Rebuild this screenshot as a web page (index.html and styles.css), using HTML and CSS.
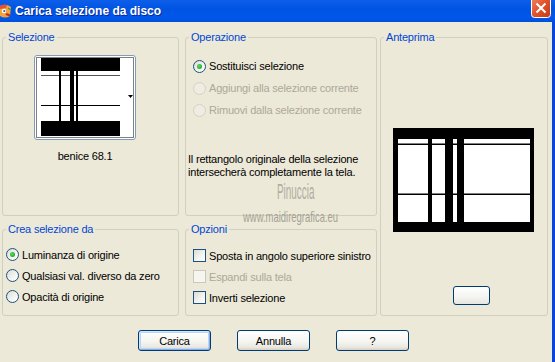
FILE: index.html
```html
<!DOCTYPE html>
<html lang="it">
<head>
<meta charset="utf-8">
<title>Carica selezione da disco</title>
<link rel="stylesheet" href="styles.css">
</head>
<body>
<div class="window">
  <header class="titlebar">
    <svg class="app-icon" width="12" height="16" viewBox="0 0 12 16">
      <path d="M0 3 Q6 0 11 4 L10 13 Q5 16 0 13 Z" fill="#F2A43A"/>
      <path d="M0 3 Q4 1 7 2 L6 5 L0 6 Z" fill="#E8532B"/>
      <circle cx="4" cy="8" r="2.2" fill="#fff"/>
      <circle cx="4.3" cy="8" r="1.1" fill="#2A56C6"/>
      <path d="M6 11 L10 12.5" stroke="#C8281E" stroke-width="2"/>
      <path d="M8 5 L11 7" stroke="#3E9A3A" stroke-width="1.5"/>
    </svg>
    <span class="title">Carica selezione da disco</span>
    <svg class="close" width="20" height="18" viewBox="0 0 20 18">
      <defs>
        <linearGradient id="cg" x1="0" y1="0" x2="1" y2="1">
          <stop offset="0" stop-color="#F08A65"/>
          <stop offset="0.5" stop-color="#E1522A"/>
          <stop offset="1" stop-color="#C23A14"/>
        </linearGradient>
      </defs>
      <rect x="0.5" y="-3.5" width="19" height="21" rx="3" fill="url(#cg)" stroke="#fff"/>
      <path d="M5.5 3.5 L14.5 12.5 M14.5 3.5 L5.5 12.5" stroke="#fff" stroke-width="2"/>
    </svg>
  </header>

  <main class="client">
    <div class="panels">
      <div class="col col-left">
        <section class="group group-top">
          <span class="group-label">Selezione</span>
          <div class="thumb">
            <div class="thumb-btn">
              <svg class="thumb-svg" width="100" height="83" viewBox="0 0 100 83">
                <rect x="1.5" y="1.5" width="97" height="80" fill="none" stroke="#000" stroke-dasharray="1 1"/>
                <rect x="6" y="2" width="79" height="13" fill="#000"/>
                <rect x="6" y="19" width="79" height="1" fill="#555"/>
                <rect x="6" y="49" width="79" height="1" fill="#000"/>
                <rect x="6" y="65" width="79" height="15" fill="#000"/>
                <rect x="24" y="15" width="2" height="50" fill="#000"/>
                <rect x="35" y="15" width="4" height="50" fill="#000"/>
                <rect x="41" y="15" width="2" height="50" fill="#000"/>
                <polygon points="93,39 98,39 95.5,42" fill="#000"/>
              </svg>
            </div>
            <div class="thumb-name">benice 68.1</div>
          </div>
        </section>
        <section class="group group-bottom">
          <span class="group-label">Crea selezione da</span>
          <ul class="opts opts-crea">
            <li class="opt"><span class="radio checked"></span>Luminanza di origine</li>
            <li class="opt"><span class="radio"></span>Qualsiasi val. diverso da zero</li>
            <li class="opt"><span class="radio"></span>Opacità di origine</li>
          </ul>
        </section>
      </div>

      <div class="col col-mid">
        <section class="group group-top">
          <span class="group-label">Operazione</span>
          <ul class="opts opts-op">
            <li class="opt"><span class="radio checked"></span>Sostituisci selezione</li>
            <li class="opt disabled"><span class="radio"></span>Aggiungi alla selezione corrente</li>
            <li class="opt disabled"><span class="radio"></span>Rimuovi dalla selezione corrente</li>
          </ul>
          <p class="note">Il rettangolo originale della selezione<br>intersecherà completamente la tela.</p>
        </section>
        <section class="group group-bottom">
          <span class="group-label">Opzioni</span>
          <ul class="opts opts-opz">
            <li class="opt"><span class="check"></span>Sposta in angolo superiore sinistro</li>
            <li class="opt disabled"><span class="check"></span>Espandi sulla tela</li>
            <li class="opt"><span class="check"></span>Inverti selezione</li>
          </ul>
        </section>
      </div>

      <section class="group group-preview">
        <span class="group-label">Anteprima</span>
        <svg class="preview-img" width="141" height="104" viewBox="0 0 141 104">
          <rect x="0" y="0" width="141" height="104" fill="#000"/>
          <rect x="5" y="11" width="132" height="83" fill="#fff"/>
          <rect x="5" y="15.5" width="132" height="1.5" fill="#000"/>
          <rect x="5" y="65.5" width="132" height="1.5" fill="#000"/>
          <rect x="35" y="11" width="4" height="83" fill="#000"/>
          <rect x="52" y="11" width="8" height="83" fill="#000"/>
          <rect x="64" y="11" width="7" height="83" fill="#000"/>
        </svg>
        <div class="preview-btn"></div>
      </section>
    </div>

    <div class="buttons">
      <button class="btn btn-default" type="button">Carica</button>
      <button class="btn" type="button">Annulla</button>
      <button class="btn" type="button">?</button>
    </div>
  </main>

  <div class="wm wm-name">Pinuccia</div>
  <div class="wm wm-url">www.maidiregrafica.eu</div>
</div>
</body>
</html>
```

FILE: styles.css
```css
body {
  margin: 0;
  background: #ECE9D8;
  font-family: "Liberation Sans", Arial, sans-serif;
  font-size: 11px;
  letter-spacing: -0.2px;
  color: #000;
}

.window {
  position: relative;
  width: 555px;
  height: 362px;
  overflow: hidden;
  background: #ECE9D8;
}

/* Title bar */
.titlebar {
  display: flex;
  align-items: center;
  height: 22px;
  background: linear-gradient(to bottom, #0D5FEA 0%, #0054E3 40%, #0057E9 80%, #004FDC 100%);
}

.app-icon {
  flex: none;
  display: block;
}

.title {
  margin-left: 3px;
  color: #fff;
  font-weight: bold;
  font-size: 12px;
  letter-spacing: 0;
  text-shadow: 1px 1px 0 #0A2A9A;
}

.close {
  flex: none;
  display: block;
  align-self: flex-start;
  margin-left: auto;
  margin-right: 4px;
}

/* Client area */
.client {
  height: 340px;
  box-sizing: border-box;
  border-right: 3px solid #0845D8;
  padding: 15px 0 0 2px;
}

.panels {
  display: flex;
  align-items: flex-start;
}

.col {
  display: flex;
  flex-direction: column;
}

.col-left {
  width: 177px;
  margin-right: 6px;
}

.col-mid {
  width: 192px;
  margin-right: 3px;
}

.group {
  box-sizing: border-box;
  border: 1px solid #D0D0BF;
  border-radius: 3px;
}

.group-top {
  height: 179px;
}

.group-bottom {
  height: 87px;
  margin-top: 13px;
}

.group-preview {
  width: 168px;
  height: 279px;
}

.group-label {
  display: table;
  margin: -8px 0 0 3px;
  padding: 0 2px;
  line-height: 14px;
  color: #0046D5;
  background: #ECE9D8;
}

/* Selection thumbnail */
.thumb {
  display: flex;
  flex-direction: column;
  align-items: center;
  width: 102px;
  margin: 11px 0 0 31px;
}

.thumb-btn {
  box-sizing: border-box;
  width: 102px;
  height: 85px;
  border: 1px solid #7F9DB9;
  border-radius: 3px;
  background: #fff;
}

.thumb-svg {
  display: block;
}

.thumb-name {
  margin-top: 10px;
  line-height: 13px;
}

/* Option lists */
.opts {
  list-style: none;
  margin: 0;
}

.opt {
  display: flex;
  align-items: center;
  gap: 3px;
  height: 21px;
}

.opts-op {
  margin-top: 11px;
  padding-left: 7px;
}

.opts-op .opt {
  height: 22px;
}

.opts-crea {
  margin-top: 8px;
  padding-left: 3px;
}

.opts-opz {
  margin-top: 9px;
  padding-left: 7px;
}

.opt.disabled {
  color: #ACA899;
}

.radio {
  flex: none;
  display: flex;
  align-items: center;
  justify-content: center;
  box-sizing: border-box;
  width: 13px;
  height: 13px;
  border: 1px solid #1C5180;
  border-radius: 50%;
  background: linear-gradient(135deg, #DCDCD7 0%, #F4F4F0 60%, #FFFFFF 100%);
}

.radio.checked::after {
  content: "";
  width: 5px;
  height: 5px;
  border-radius: 50%;
  background: radial-gradient(circle at 40% 40%, #61D861 0%, #2CB22C 60%, #21A121 100%);
}

.opt.disabled .radio {
  border-color: #D5D2C3;
  background: #EFEDE3;
}

.check {
  flex: none;
  box-sizing: border-box;
  width: 13px;
  height: 13px;
  border: 1px solid #1C5180;
  background: linear-gradient(135deg, #DCDCD7 0%, #F4F4F0 60%, #FFFFFF 100%);
}

.opt.disabled .check {
  border-color: #CAC8BB;
  background: #F6F5F0;
}

.note {
  margin: 32px 0 0 2px;
  line-height: 13px;
}

/* Preview */
.preview-img {
  display: block;
  margin: 84px 0 0 12px;
}

.preview-btn {
  box-sizing: border-box;
  width: 37px;
  height: 19px;
  margin: 54px 0 0 72px;
  border: 1px solid #003C74;
  border-radius: 3px;
  background: linear-gradient(#FFFFFF 0%, #F4F4F1 60%, #E6E5DF 100%);
}

/* Buttons */
.buttons {
  display: flex;
  gap: 26px;
  margin-top: 14px;
  padding-left: 136px;
}

.btn {
  box-sizing: border-box;
  width: 73px;
  height: 21px;
  padding: 0;
  border: 1px solid #003C74;
  border-radius: 3px;
  background: linear-gradient(#FFFFFF 0%, #F5F5F1 55%, #E9E8E1 85%, #D6D0C5 100%);
  font: inherit;
  letter-spacing: inherit;
  color: #000;
}

.btn-default {
  box-shadow: inset 1px 1px 0 #CEE7FF, inset -1px -1px 0 #89ADE4, inset 0 0 0 2px #BCD4F6;
}

/* Watermark overlay */
.wm {
  position: absolute;
  white-space: nowrap;
  transform-origin: left top;
  letter-spacing: 0;
}

.wm-name {
  left: 277px;
  top: 181px;
  font-size: 22px;
  line-height: 22px;
  color: #B0AD9F;
  transform: scaleX(0.45);
}

.wm-url {
  left: 243px;
  top: 209px;
  font-size: 15px;
  line-height: 15px;
  color: #A4A194;
  transform: scaleX(0.63);
}
```
